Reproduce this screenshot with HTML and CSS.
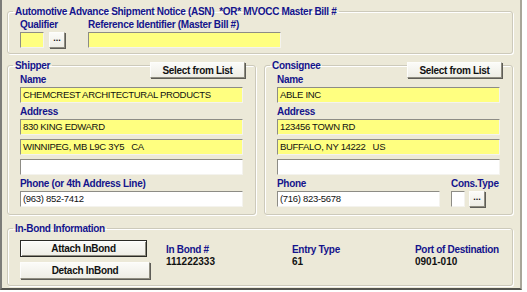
FILE: index.html
```html
<!DOCTYPE html>
<html lang="en">
<head>
  <meta charset="UTF-8">
  <title>Shipment Notice</title>
  <link rel="stylesheet" href="styles.css">
</head>
<body>
  <div class="window">

    <fieldset class="group group-top">
      <legend>Automotive Advance Shipment Notice (ASN)&nbsp; *OR* MVOCC Master Bill #</legend>
      <div class="row">
        <div class="col col-qualifier">
          <label>Qualifier</label>
          <div class="inline">
            <div class="field yellow small"></div>
            <button class="btn dots">...</button>
          </div>
        </div>
        <div class="col">
          <label>Reference Identifier (Master Bill #)</label>
          <div class="field yellow ref"></div>
        </div>
      </div>
    </fieldset>

    <div class="parties">
      <fieldset class="group party">
        <legend>Shipper</legend>
        <button class="btn select">Select from List</button>
        <label class="first">Name</label>
        <div class="field yellow">CHEMCREST ARCHITECTURAL PRODUCTS</div>
        <label>Address</label>
        <div class="field yellow">830 KING EDWARD</div>
        <div class="field yellow gap">WINNIPEG, MB L9C 3Y5&nbsp;&nbsp; CA</div>
        <div class="field gap"></div>
        <label>Phone (or 4th Address Line)</label>
        <div class="field">(963) 852-7412</div>
      </fieldset>

      <fieldset class="group party">
        <legend>Consignee</legend>
        <button class="btn select">Select from List</button>
        <label class="first">Name</label>
        <div class="field yellow">ABLE INC</div>
        <label>Address</label>
        <div class="field yellow">123456 TOWN RD</div>
        <div class="field yellow gap">BUFFALO, NY 14222&nbsp;&nbsp; US</div>
        <div class="field gap"></div>
        <div class="row phone-row">
          <div class="col col-phone">
            <label>Phone</label>
            <div class="field">(716) 823-5678</div>
          </div>
          <div class="col">
            <label>Cons.Type</label>
            <div class="inline">
              <div class="field tiny"></div>
              <button class="btn dots">...</button>
            </div>
          </div>
        </div>
      </fieldset>
    </div>

    <fieldset class="group group-bond">
      <legend>In-Bond Information</legend>
      <div class="row">
        <div class="col col-buttons">
          <button class="btn wide default">Attach InBond</button>
          <button class="btn wide">Detach InBond</button>
        </div>
        <div class="col info col-bond">
          <label>In Bond #</label>
          <div class="value">111222333</div>
        </div>
        <div class="col info col-entry">
          <label>Entry Type</label>
          <div class="value">61</div>
        </div>
        <div class="col info">
          <label>Port of Destination</label>
          <div class="value">0901-010</div>
        </div>
      </div>
    </fieldset>

  </div>
</body>
</html>
```

FILE: styles.css
```css
:root {
  --face: #ece9d8;
  --navy: #14148c;
  --yellow: #ffff80;
  --group-line: #cdcabb;
}

* {
  box-sizing: border-box;
  margin: 0;
  padding: 0;
  font-family: 'Liberation Sans', Arial, sans-serif;
}

body {
  background-color: white;
}

.window {
  width: 522px;
  height: 290px;
  background-color: var(--face);
  border-left: 2px solid #7c7c78;
  border-right: 2px solid #a8a699;
  border-bottom: 2px solid #55554f;
  padding: 5px 0 0 5px;
}

.group {
  border: 1px solid var(--group-line);
  border-radius: 3px;
  box-shadow: 1px 1px 0 white, inset 1px 1px 0 white;
  position: relative;
}

.group legend {
  margin-left: -7px;
  padding: 0 2px;
  color: var(--navy);
  font-weight: bold;
  font-size: 10px;
  letter-spacing: -0.3px;
  line-height: 13px;
}

label {
  display: block;
  color: var(--navy);
  font-weight: bold;
  font-size: 10px;
  letter-spacing: -0.3px;
  line-height: 14px;
  margin-top: 2px;
  white-space: nowrap;
}

.row {
  display: flex;
}

.inline {
  display: flex;
  gap: 5px;
}

.field {
  height: 16px;
  background-color: white;
  border: 1px solid;
  border-color: #8d8c85 #f4f3ee #f4f3ee #8d8c85;
  font-size: 9.5px;
  letter-spacing: -0.3px;
  line-height: 14px;
  padding-left: 2px;
  color: #111;
  white-space: nowrap;
  overflow: hidden;
}

.field.yellow {
  background-color: var(--yellow);
}

.field.gap {
  margin-top: 4px;
}

.btn {
  display: block;
  height: 16px;
  border: 1px solid;
  border-color: #fdfdfb #8e8c80 #8e8c80 #fdfdfb;
  background: linear-gradient(#fbfbf8, #eeede5);
  box-shadow: 1px 1px 0 #5e5d57;
  font-weight: bold;
  font-size: 10px;
  letter-spacing: -0.3px;
  color: #111;
  line-height: 13px;
  cursor: pointer;
}

.btn.dots {
  width: 16px;
  font-size: 9px;
  letter-spacing: 0;
  line-height: 8px;
  padding-bottom: 4px;
}

/* top group */
.group-top {
  width: 506px;
  padding: 0 0 5px 12px;
}

.group-top label {
  margin-top: 0;
}

.col-qualifier {
  width: 68px;
}

.field.small {
  width: 24px;
}

.field.ref {
  width: 193px;
}

/* shipper / consignee */
.parties {
  display: flex;
  gap: 8px;
  margin-top: 5px;
}

.party {
  width: 249px;
  padding: 0 12px 7px 12px;
}

.party .first {
  margin-top: 1px;
}

.btn.select {
  position: absolute;
  top: -10px;
  right: 10px;
  width: 95px;
}

.col-phone {
  width: 174px;
}

.col-phone .field {
  width: 163px;
}

.field.tiny {
  width: 14px;
  padding: 0;
}

.phone-row .inline {
  gap: 4px;
}

/* in-bond group */
.group-bond {
  width: 506px;
  margin-top: 7px;
  padding: 5px 0 6px 12px;
}

.col-buttons {
  width: 146px;
  display: flex;
  flex-direction: column;
  gap: 5px;
}

.btn.wide {
  width: 130px;
  height: 17px;
}

.btn.default {
  width: 127px;
  border: 1px solid #2a2a26;
  box-shadow: inset 1px 1px 0 #fff, inset -1px -1px 0 #8e8c80;
}

.info {
  padding-top: 4px;
}

.info label {
  margin-top: 0;
  line-height: 12px;
}

.col-bond {
  width: 126px;
}

.col-entry {
  width: 123px;
}

.value {
  font-weight: bold;
  font-size: 10px;
  line-height: 12px;
  color: #111;
}
```
